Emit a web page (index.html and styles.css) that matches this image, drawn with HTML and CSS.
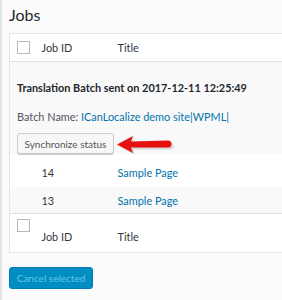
FILE: index.html
```html
<!DOCTYPE html>
<html>
<head>
<meta charset="utf-8">
<link rel="stylesheet" href="styles.css">
</head>
<body>
<div class="page">
  <h2 class="title">Jobs</h2>
  <table class="jobs">
    <colgroup><col class="c-check"><col class="c-id"><col class="c-title"></colgroup>
    <thead>
      <tr class="head">
        <td class="check"><span class="box"></span></td>
        <td>Job ID</td>
        <td>Title</td>
      </tr>
    </thead>
    <tbody>
      <tr class="batch">
        <td colspan="3">
          <div class="batch-title">Translation Batch sent on 2017-12-11 12:25:49</div>
          <div class="batch-name">Batch Name: <a href="#">ICanLocalize demo site|WPML|</a></div>
          <div class="sync-row">
            <button class="btn">Synchronize status</button>
            <svg class="arrow" width="58" height="20" viewBox="0 0 58 20">
              <path d="M2 10.5 L18 2 L16 7.5 L53 6.5 A3.5 3.5 0 0 1 53 13.5 L16 13.5 L18 19 Z" fill="#9a9a9a" opacity="0.35" transform="translate(1,1)"/>
              <path d="M1 9.5 L17 1 L15 6.5 L52 5.5 A3.5 3.5 0 0 1 52 12.5 L15 12.5 L17 18 Z" fill="#e5120f"/>
            </svg>
          </div>
        </td>
      </tr>
      <tr class="row white">
        <td></td>
        <td>14</td>
        <td><a href="#">Sample Page</a></td>
      </tr>
      <tr class="row alt">
        <td></td>
        <td>13</td>
        <td><a href="#">Sample Page</a></td>
      </tr>
    </tbody>
    <tfoot>
      <tr class="foot">
        <td class="check"><span class="box"></span></td>
        <td>Job ID</td>
        <td>Title</td>
      </tr>
    </tfoot>
  </table>
  <button class="btn-primary" disabled>Cancel selected</button>
</div>
</body>
</html>
```
FILE: styles.css
```css
html, body {
  margin: 0;
  padding: 0;
  overflow: hidden;
  background: #fbfbfb;
}
body {
  font-family: "Segoe UI", Lato, "Open Sans", sans-serif;
  font-size: 10.9px;
  color: #32373c;
}
.page {
  border-left: 2px solid #e2e2e2;
  padding-left: 7px;
  width: 330px;
  height: 300px;
  box-sizing: border-box;
}
.title {
  margin: 0;
  padding-top: 5px;
  height: 33px;
  box-sizing: border-box;
  font-size: 16px;
  font-weight: 400;
  color: #23282d;
  line-height: 20px;
}
.jobs {
  width: 320px;
  border-collapse: collapse;
  table-layout: fixed;
  background: #fff;
  border: 1px solid #e5e5e5;
}
.c-check { width: 32px; }
.c-id { width: 76px; }
.jobs td {
  padding: 0;
  vertical-align: middle;
  line-height: 15px;
}
.head td {
  padding-top: 6px;
  padding-bottom: 6px;
  border-bottom: 1px solid #e1e1e1;
}
.check { padding-left: 7px !important; }
.box {
  display: block;
  width: 11px;
  height: 11px;
  border: 1px solid #b4b9be;
  background: #fff;
}
.batch td {
  background: #f9f9f9;
  padding: 0 0 0 7px;
}
.batch-title {
  font-weight: 700;
  color: #23282d;
  padding-top: 18px;
  line-height: 15px;
}
.batch-name {
  margin-top: 14px;
  line-height: 15px;
  color: #50575e;
}
a {
  color: #0073aa;
  text-decoration: none;
}
.sync-row {
  display: flex;
  align-items: center;
  margin-top: 9px;
  height: 21px;
}
.btn {
  height: 21px;
  width: 97px;
  padding: 0;
  font: inherit;
  font-size: 10px;
  color: #555;
  background: #f7f7f7;
  border: 1px solid #ccc;
  border-radius: 3px;
  box-shadow: 0 1px 0 #ccc;
  line-height: 18px;
}
.arrow {
  margin-left: 2px;
  margin-top: 2px;
}
.row td { color: #32373c; }
.row.white td { padding: 11px 0 7px; background: #fff; }
.row.alt td { padding: 6px 0 5px; background: #f9f9f9; }
.foot td {
  border-top: 1px solid #e1e1e1;
  vertical-align: top;
  padding-top: 15px;
  padding-bottom: 8px;
}
.foot td.check { padding-top: 5px; }
.btn-primary {
  display: block;
  margin-top: 14px;
  height: 22px;
  width: 84px;
  padding: 0;
  font: inherit;
  font-size: 10px;
  color: #66c6e4;
  background: #008ec2;
  border: 1px solid #007cb2;
  border-radius: 3px;
  line-height: 18px;
}
```
